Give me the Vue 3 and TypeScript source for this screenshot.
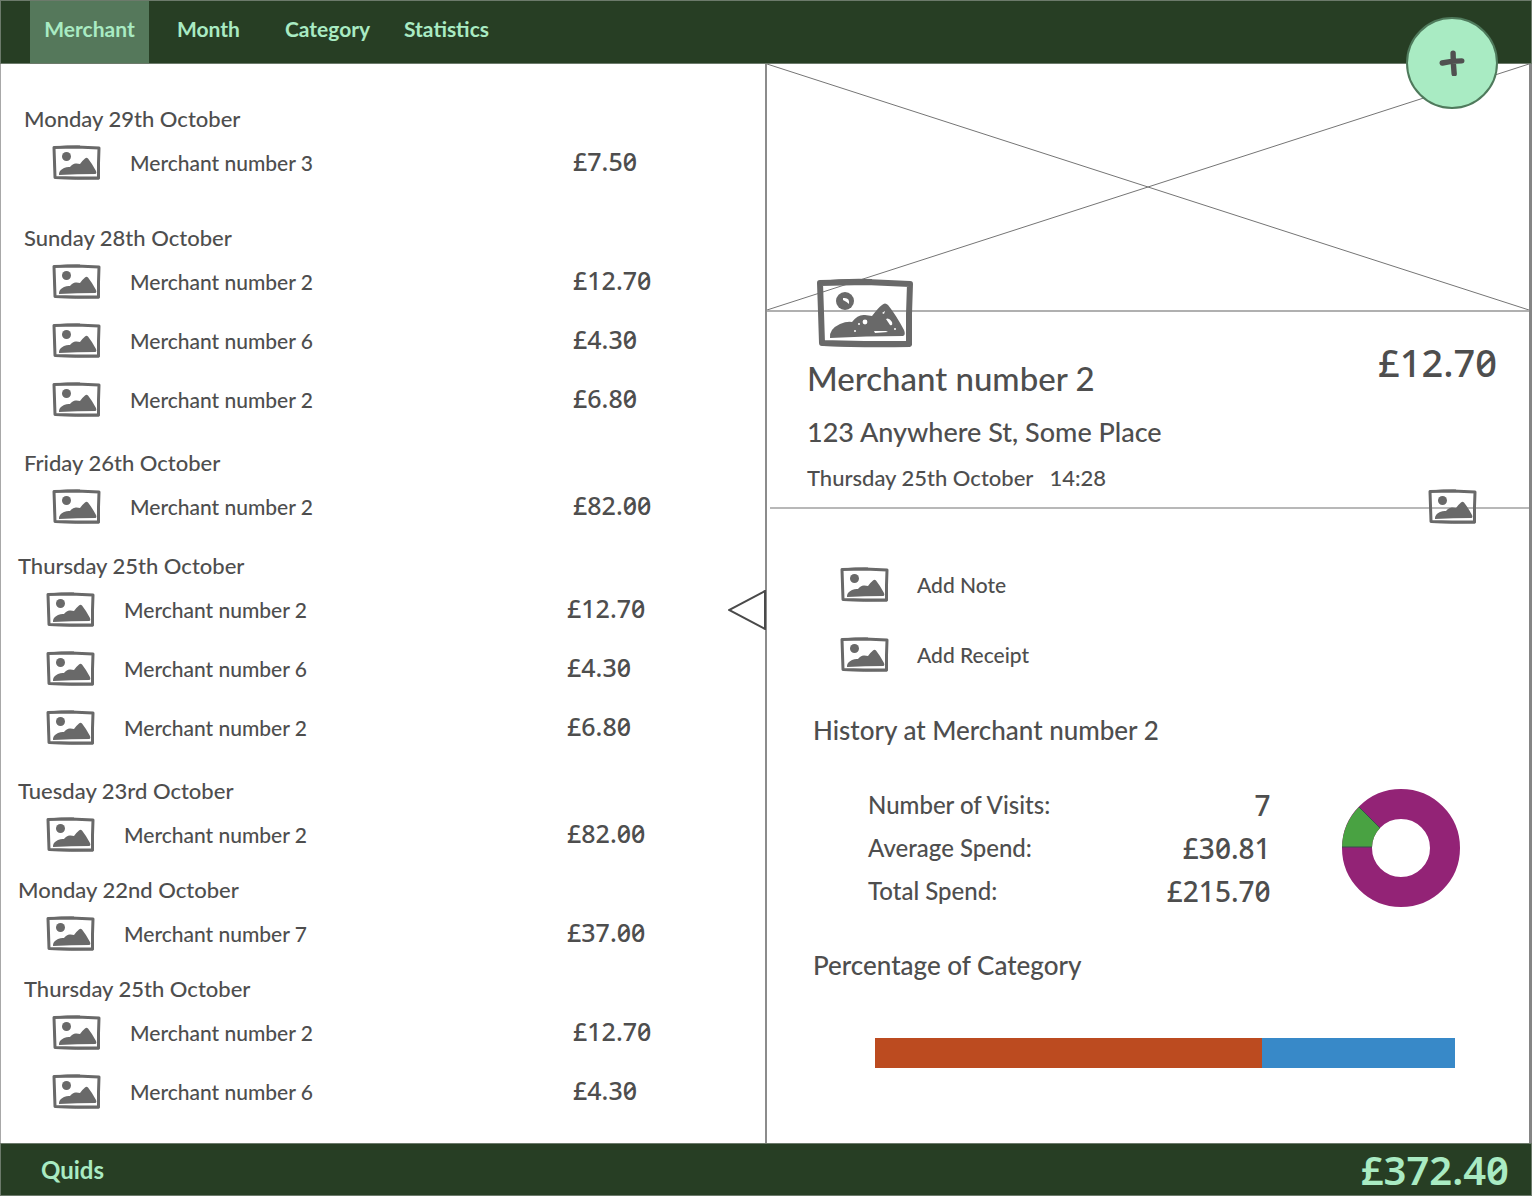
<script setup lang="ts">
import { defineComponent, h, ref } from 'vue'

interface Purchase {
  merchant: string
  amount: string
  selected?: boolean
}
interface Day {
  label: string
  gap: string
  inset?: boolean
  purchases: Purchase[]
}

const tabs = ['Merchant', 'Month', 'Category', 'Statistics']
const activeTab = ref('Merchant')

const days: Day[] = [
  { label: 'Monday 29th October', gap: 'gap-wide', purchases: [{ merchant: 'Merchant number 3', amount: '£7.50' }] },
  {
    label: 'Sunday 28th October',
    gap: 'gap-medium',
    purchases: [
      { merchant: 'Merchant number 2', amount: '£12.70' },
      { merchant: 'Merchant number 6', amount: '£4.30' },
      { merchant: 'Merchant number 2', amount: '£6.80' },
    ],
  },
  { label: 'Friday 26th October', gap: 'gap-small', purchases: [{ merchant: 'Merchant number 2', amount: '£82.00' }] },
  {
    label: 'Thursday 25th October',
    gap: 'gap-medium',
    inset: true,
    purchases: [
      { merchant: 'Merchant number 2', amount: '£12.70', selected: true },
      { merchant: 'Merchant number 6', amount: '£4.30' },
      { merchant: 'Merchant number 2', amount: '£6.80' },
    ],
  },
  { label: 'Tuesday 23rd October', gap: 'gap-tight', inset: true, purchases: [{ merchant: 'Merchant number 2', amount: '£82.00' }] },
  { label: 'Monday 22nd October', gap: 'gap-tight', inset: true, purchases: [{ merchant: 'Merchant number 7', amount: '£37.00' }] },
  {
    label: 'Thursday 25th October',
    gap: 'gap-medium',
    purchases: [
      { merchant: 'Merchant number 2', amount: '£12.70' },
      { merchant: 'Merchant number 6', amount: '£4.30' },
    ],
  },
]

const stats = [
  { label: 'Number of Visits:', value: '7' },
  { label: 'Average Spend:', value: '£30.81' },
  { label: 'Total Spend:', value: '£215.70' },
]

const share = [
  { color: '#bc4b20', percent: 66.7 },
  { color: '#3889c8', percent: 33.3 },
]

const ink = '#696969'

// Hand-sketched picture placeholder; the detailed version adds highlights.
const PictureIcon = defineComponent({
  props: { detailed: Boolean },
  setup(props) {
    return () =>
      h('svg', { viewBox: '0 0 98 70', 'aria-hidden': 'true' }, [
        h('path', { d: 'M4 5 L50 4 L94 6 L93 36 L93 66 L48 66 L6 65 L5 34 Z', fill: 'none', stroke: ink, 'stroke-width': 6, 'stroke-linejoin': 'round' }),
        h('path', { d: 'M3 4 Q30 1 56 2 M8 67 Q46 69 94 68 M3 4 L5 50 M95 5 L95 67', fill: 'none', stroke: ink, 'stroke-width': 2 }),
        h('circle', { cx: 29, cy: 23, r: 9, fill: ink }),
        h('path', { d: 'M14 60 Q13 51 24 46 Q31 43 36 44 Q42 36 49 37 L56 38 Q62 30 66 27 Q69 24 72 27 Q80 37 88 52 Q90 57 87 58 Q50 58 14 60 Z', fill: ink }),
        props.detailed
          ? h('g', { fill: '#fff' }, [
              h('path', { d: 'M27 20 Q34 19 33 26 Q31 24 27 22 Z' }),
              h('circle', { cx: 49, cy: 44, r: 2.4 }),
              h('circle', { cx: 43, cy: 46, r: 1 }),
              h('path', { d: 'M70 41 Q73 39 76 44 Q77 48 74 47 Z' }),
              h('path', { d: 'M66 35 L69 33 L68 36 Z' }),
              h('path', { d: 'M58 53 L70 53 L72 54 L59 55 Z' }),
              h('circle', { cx: 79, cy: 51, r: 1 }),
              h('circle', { cx: 39, cy: 53, r: 1 }),
            ])
          : null,
      ])
  },
})
</script>

<template>
  <div class="app">
    <header class="topbar">
      <nav class="tabs">
        <button
          v-for="tab in tabs"
          :key="tab"
          type="button"
          class="tab"
          :class="{ active: tab === activeTab }"
          @click="activeTab = tab"
        >{{ tab }}</button>
      </nav>
      <button type="button" class="add" aria-label="Add purchase">
        <svg viewBox="0 0 24 24" aria-hidden="true">
          <path d="M3 12 Q11 10 21 10 M13 3 Q13 12 14 22" />
        </svg>
      </button>
    </header>

    <main class="panes">
      <section class="list">
        <section v-for="(day, i) in days" :key="i" class="day" :class="[day.gap, { inset: day.inset }]">
          <h2 class="day-label">{{ day.label }}</h2>
          <div v-for="(p, j) in day.purchases" :key="j" class="purchase">
            <PictureIcon class="icon" />
            <span class="merchant">{{ p.merchant }}</span>
            <span class="amount">{{ p.amount }}</span>
            <svg v-if="p.selected" class="pointer" viewBox="0 0 38 40" aria-hidden="true">
              <path d="M37 1 L1 20 L37 39 Z" />
            </svg>
          </div>
        </section>
      </section>

      <section class="detail">
        <div class="hero">
          <svg class="cross" viewBox="0 0 100 100" preserveAspectRatio="none" aria-hidden="true">
            <path d="M0 0 L100 100 M0 100 L100 0" vector-effect="non-scaling-stroke" />
          </svg>
          <PictureIcon class="logo" detailed />
        </div>

        <div class="summary">
          <div class="place">
            <h1 class="title">Merchant number 2</h1>
            <p class="address">123 Anywhere St, Some Place</p>
            <p class="when"><span>Thursday 25th October</span><span>14:28</span></p>
          </div>
          <span class="price">£12.70</span>
          <PictureIcon class="icon badge" />
        </div>

        <div class="actions">
          <button type="button" class="action"><PictureIcon class="icon" /><span>Add Note</span></button>
          <button type="button" class="action"><PictureIcon class="icon" /><span>Add Receipt</span></button>
        </div>

        <h2 class="heading">History at Merchant number 2</h2>
        <div class="history">
          <dl class="stats">
            <div v-for="s in stats" :key="s.label" class="stat">
              <dt>{{ s.label }}</dt>
              <dd>{{ s.value }}</dd>
            </div>
          </dl>
          <svg class="donut" viewBox="0 0 118 118" aria-hidden="true">
            <circle cx="59" cy="59" r="44" fill="none" stroke="#932376" stroke-width="30" />
            <path d="M0 58 A59 59 0 0 1 17 18 L38 39 A29 29 0 0 0 30 58 Z" fill="#49a242" />
            <path d="M0 58 H30 M17 18 L38 39" stroke="#3d4a50" stroke-width="1" />
          </svg>
        </div>

        <h2 class="heading">Percentage of Category</h2>
        <div class="share">
          <span v-for="s in share" :key="s.color" :style="{ width: s.percent + '%', background: s.color }"></span>
        </div>
      </section>
    </main>

    <footer class="bottombar">
      <span class="brand">Quids</span>
      <span class="total">£372.40</span>
    </footer>
  </div>
</template>

<style>
body {
  margin: 0;
  background: #fff;
}
</style>

<style scoped>
.app {
  display: flex;
  flex-direction: column;
  min-height: 100vh;
  box-sizing: border-box;
  color: #4e4e4e;
  font-family: Lato, 'Noto Sans', sans-serif;
  font-size: 21px;
  font-weight: 500;
  line-height: 28px;
}
h1, h2, p, dl, dd {
  margin: 0;
  font-weight: 500;
}
button {
  padding: 0;
  border: 0;
  background: none;
  color: inherit;
  font: inherit;
  cursor: pointer;
}
.amount, .price, .total, dd {
  font-family: 'Noto Sans', sans-serif;
  font-variant-numeric: slashed-zero;
}

.topbar {
  position: relative;
  box-sizing: border-box;
  height: 64px;
  padding-left: 29px;
  border: 1px solid #6c7a6b;
  background: #273e24;
}
.tabs {
  display: flex;
  height: 100%;
}
.tab {
  width: 119px;
  padding-bottom: 6px;
  color: #a9ebc3;
  font-weight: 700;
}
.tab.active {
  background: #55785b;
}
.add {
  position: absolute;
  z-index: 1;
  top: 16px;
  right: 33px;
  display: grid;
  place-items: center;
  width: 92px;
  height: 92px;
  border: 2px solid #4f7a5c;
  border-radius: 50%;
  background: #a9ebc3;
}
.add svg {
  width: 26px;
  height: 26px;
}
.add path {
  fill: none;
  stroke: #505050;
  stroke-width: 5;
  stroke-linecap: round;
}

.panes {
  display: grid;
  flex: 1;
  grid-template-columns: 1fr 1fr;
  border-right: 3px solid #858585;
  border-left: 1px solid #a8a8a8;
}
.icon {
  flex: none;
  width: 49px;
  height: 35px;
}
.list {
  padding: 41px 0 22px;
}
.day {
  padding-left: 23px;
}
.day.inset {
  padding-right: 6px;
  padding-left: 17px;
}
.day:last-child {
  padding-bottom: 0;
}
.gap-wide {
  padding-bottom: 32px;
}
.gap-medium {
  padding-bottom: 20px;
}
.gap-small {
  padding-bottom: 16px;
}
.gap-tight {
  padding-bottom: 12px;
}
.day-label {
  font-size: 22px;
}
.purchase {
  position: relative;
  display: flex;
  align-items: center;
  height: 59px;
  padding-left: 28px;
}
.merchant {
  flex: 1;
  padding-left: 29px;
}
.amount {
  width: 192px;
  padding-bottom: 4px;
  font-size: 25px;
}
.pointer {
  position: absolute;
  right: -7px;
  width: 38px;
  height: 40px;
}
.pointer path {
  fill: #fff;
  stroke: #4a4a4a;
  stroke-width: 2;
}

.detail {
  border-left: 2px solid #8c8c8c;
}
.hero {
  position: relative;
  height: 246px;
  border-bottom: 2px solid #b0b0b0;
}
.cross {
  display: block;
  width: 100%;
  height: 100%;
}
.cross path {
  stroke: #757575;
  stroke-width: 1;
}
.logo {
  position: absolute;
  bottom: -38px;
  left: 49px;
  width: 98px;
  height: 70px;
}
.summary {
  position: relative;
  display: flex;
  justify-content: space-between;
  margin-left: 3px;
  padding: 44px 32px 15px 37px;
  border-bottom: 2px solid #b8b8b8;
}
.title {
  font-size: 33px;
  line-height: 44px;
}
.address {
  padding: 16px 0;
  font-size: 27px;
  line-height: 32px;
}
.when {
  display: flex;
  gap: 16px;
  font-size: 22px;
}
.price {
  margin-top: -8px;
  font-size: 38px;
}
.badge {
  position: absolute;
  right: 52px;
  bottom: -17px;
}
.actions {
  display: flex;
  flex-direction: column;
  gap: 35px;
  padding: 58px 0 0 73px;
}
.action {
  display: flex;
  align-items: center;
  gap: 28px;
}
.heading {
  padding: 42px 0 0 46px;
  font-size: 26px;
  line-height: 32px;
}
.history {
  display: flex;
  align-items: center;
  justify-content: space-between;
  padding: 37px 69px 0 101px;
}
.history + .heading {
  padding-top: 37px;
}
.stats {
  width: 68%;
  font-size: 24px;
}
.stat {
  display: flex;
  align-items: center;
  justify-content: space-between;
  height: 43px;
}
dd {
  font-size: 28px;
}
.donut {
  width: 118px;
  height: 118px;
}
.share {
  display: flex;
  height: 30px;
  margin: 57px 74px 0 108px;
}

.bottombar {
  display: flex;
  align-items: center;
  justify-content: space-between;
  box-sizing: border-box;
  height: 53px;
  padding: 0 22px 0 40px;
  border: 1px solid #6c7a6b;
  background: #273e24;
  color: #a9ebc3;
}
.brand {
  font-size: 24px;
  font-weight: 700;
}
.total {
  font-size: 40px;
  font-weight: 600;
}
</style>
